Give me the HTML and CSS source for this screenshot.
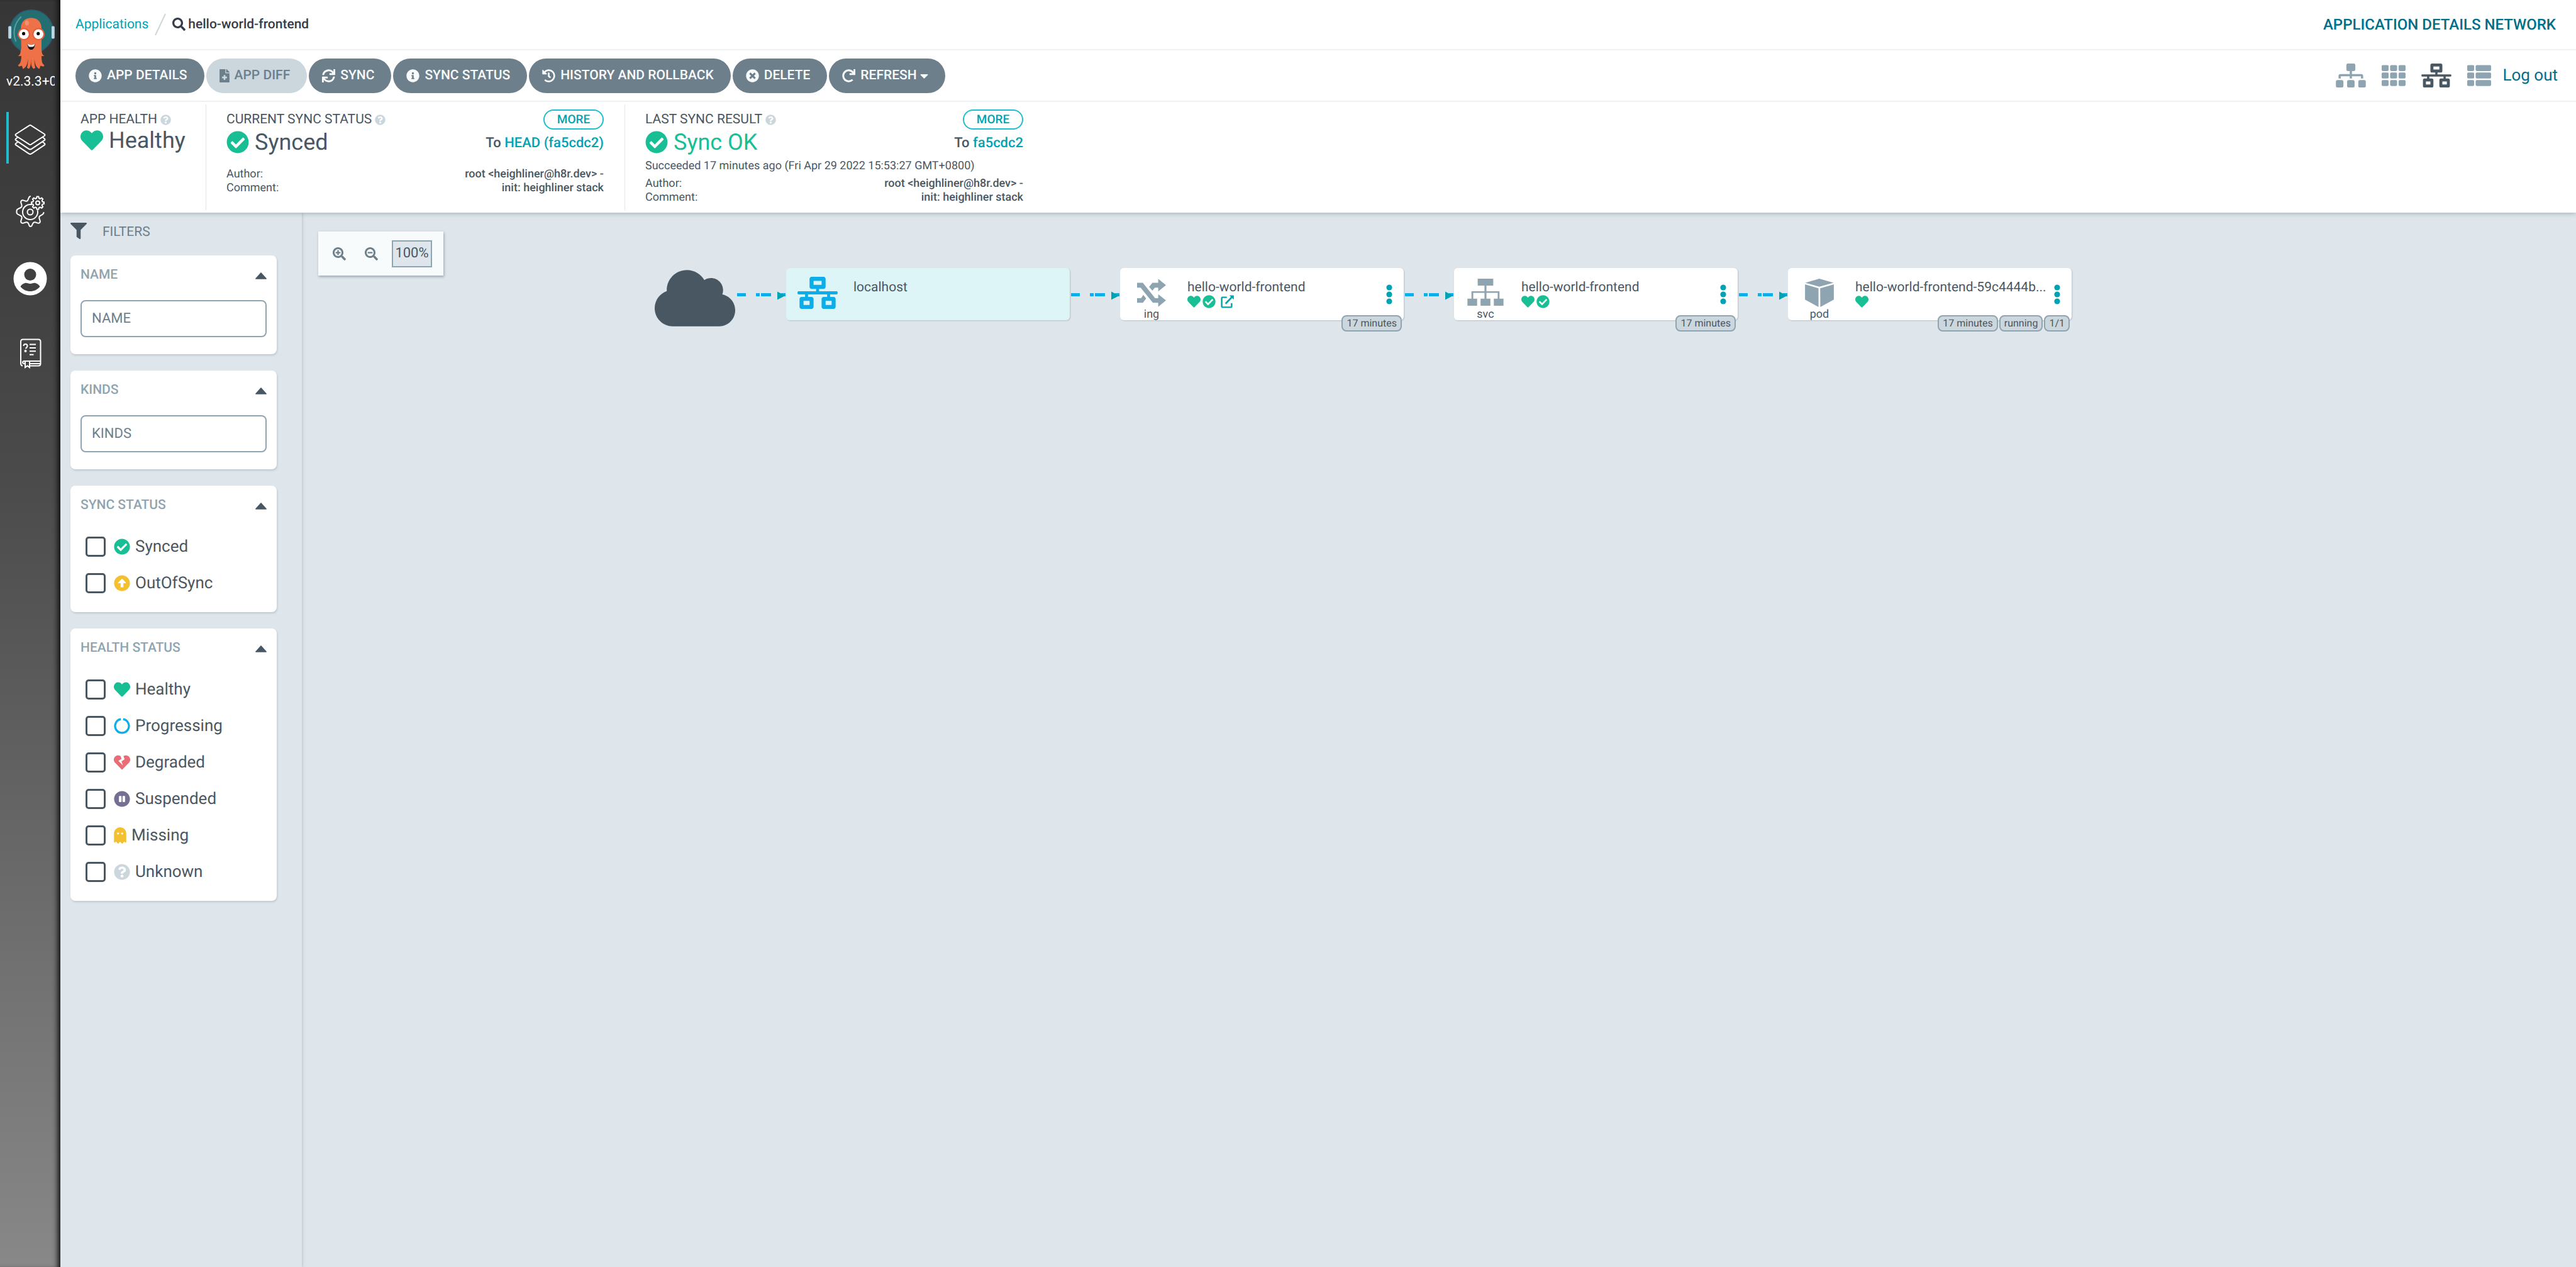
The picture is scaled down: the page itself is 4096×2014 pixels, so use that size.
FILE: index.html
```html
<!DOCTYPE html>
<html lang="en">
<head>
<meta charset="utf-8">
<title>hello-world-frontend - Application Details Network - Argo CD</title>
<link rel="stylesheet" href="styles.css">
</head>
<body>
<svg class="sprite" aria-hidden="true">
  <symbol id="i-info" viewBox="0 0 512 512"><path d="M256 8C119.043 8 8 119.083 8 256c0 136.997 111.043 248 248 248s248-111.003 248-248C504 119.083 392.957 8 256 8zm0 110c23.196 0 42 18.804 42 42s-18.804 42-42 42-42-18.804-42-42 18.804-42 42-42zm56 254c0 6.627-5.373 12-12 12h-88c-6.627 0-12-5.373-12-12v-24c0-6.627 5.373-12 12-12h12v-64h-12c-6.627 0-12-5.373-12-12v-24c0-6.627 5.373-12 12-12h64c6.627 0 12 5.373 12 12v100h12c6.627 0 12 5.373 12 12v24z"/></symbol>
  <symbol id="i-check" viewBox="0 0 512 512"><path d="M504 256c0 136.967-111.033 248-248 248S8 392.967 8 256 119.033 8 256 8s248 111.033 248 248zM227.314 387.314l184-184c6.248-6.248 6.248-16.379 0-22.627l-22.627-22.627c-6.248-6.249-16.379-6.249-22.628 0L216 308.118l-70.059-70.059c-6.248-6.248-16.379-6.248-22.628 0l-22.627 22.627c-6.248 6.248-6.248 16.379 0 22.627l104 104c6.249 6.249 16.379 6.249 22.628.001z"/></symbol>
  <symbol id="i-heart" viewBox="0 0 512 512"><path d="M462.3 62.6C407.5 15.9 326 24.3 275.7 76.2L256 96.5l-19.7-20.3C186.1 24.3 104.5 15.9 49.7 62.6c-62.8 53.6-66.1 149.8-9.9 207.9l193.5 199.8c12.5 12.9 32.8 12.9 45.3 0l193.5-199.8c56.3-58.1 53-154.3-9.8-207.9z"/></symbol>
  <symbol id="i-broken" viewBox="0 0 512 512"><path d="M473.7 73.8l-2.4-2.5c-46-47-118-51.7-169.6-14.8L336 159.9l-96 64 48 128-144-144 96-64-28.6-86.5C159.7 19.6 87 24 40.7 71.4l-2.4 2.4C-10.4 123.6-12.5 202.9 31 256l212.1 218.6c7.1 7.3 18.6 7.3 25.7 0L481 255.9c43.5-53 41.4-132.3-7.3-182.1z"/></symbol>
  <symbol id="i-file" viewBox="0 0 384 512"><path d="M377 105L279.1 7c-4.5-4.5-10.6-7-17-7H256v128h128v-6.1c0-6.3-2.5-12.4-7-16.9zm-153 31V0H24C10.7 0 0 10.7 0 24v464c0 13.3 10.7 24 24 24h336c13.3 0 24-10.7 24-24V160H248c-13.2 0-24-10.8-24-24zm64 160v48c0 4.4-3.6 8-8 8h-56v56c0 4.4-3.6 8-8 8h-48c-4.4 0-8-3.6-8-8v-56h-56c-4.4 0-8-3.6-8-8v-48c0-4.4 3.6-8 8-8h56v-56c0-4.4 3.6-8 8-8h48c4.4 0 8 3.6 8 8v56h56c4.4 0 8 3.6 8 8z"/></symbol>
  <symbol id="i-sync" viewBox="0 0 512 512"><path d="M440.65 12.57l4 82.77A247.16 247.16 0 0 0 255.83 8C134.73 8 33.91 94.92 12.29 209.82A12 12 0 0 0 24.09 224h49.05a12 12 0 0 0 11.67-9.26 175.91 175.91 0 0 1 317-56.94l-101.46-4.86a12 12 0 0 0-12.57 12v47.41a12 12 0 0 0 12 12H500a12 12 0 0 0 12-12V12a12 12 0 0 0-12-12h-47.37a12 12 0 0 0-11.98 12.57zM255.83 432a175.61 175.61 0 0 1-146-77.8l101.8 4.87a12 12 0 0 0 12.57-12v-47.4a12 12 0 0 0-12-12H12a12 12 0 0 0-12 12V500a12 12 0 0 0 12 12h47.35a12 12 0 0 0 12-12.6l-4.15-82.57A247.17 247.17 0 0 0 255.83 504c121.11 0 221.93-86.92 243.55-201.82a12 12 0 0 0-11.8-14.18h-49.05a12 12 0 0 0-11.67 9.26A175.86 175.86 0 0 1 255.83 432z"/></symbol>
  <symbol id="i-history" viewBox="0 0 512 512"><path d="M504 255.531c.253 136.64-111.18 248.372-247.82 248.468-59.015.042-113.223-20.53-155.822-54.911-11.077-8.94-11.905-25.541-1.839-35.607l11.267-11.267c8.609-8.609 22.353-9.551 31.891-1.984C173.062 425.135 212.781 440 256 440c101.705 0 184-82.311 184-184 0-101.705-82.311-184-184-184-48.814 0-93.149 18.969-126.068 49.932l50.754 50.754c10.08 10.08 2.941 27.314-11.313 27.314H24c-8.837 0-16-7.163-16-16V38.627c0-14.254 17.234-21.393 27.314-11.314l49.372 49.372C129.209 34.136 189.552 8 256 8c136.81 0 247.747 110.78 248 247.531zm-180.912 78.784l9.823-12.63c8.138-10.463 6.253-25.542-4.21-33.679L288 256.349V152c0-13.255-10.745-24-24-24h-16c-13.255 0-24 10.745-24 24v135.651l65.409 50.874c10.463 8.137 25.541 6.253 33.679-4.21z"/></symbol>
  <symbol id="i-times" viewBox="0 0 512 512"><path d="M256 8C119 8 8 119 8 256s111 248 248 248 248-111 248-248S393 8 256 8zm121.6 313.1c4.7 4.7 4.7 12.3 0 17L338 377.6c-4.7 4.7-12.3 4.7-17 0L256 312l-65.1 65.6c-4.7 4.7-12.3 4.7-17 0L134.4 338c-4.7-4.7-4.7-12.3 0-17l65.6-65-65.6-65.1c-4.7-4.7-4.7-12.3 0-17l39.6-39.6c4.7-4.7 12.3-4.7 17 0l65 65.7 65.1-65.6c4.7-4.7 12.3-4.7 17 0l39.6 39.6c4.7 4.7 4.7 12.3 0 17L312 256l65.6 65.1z"/></symbol>
  <symbol id="i-redo" viewBox="0 0 512 512"><path d="M500.33 0h-47.41a12 12 0 0 0-12 12.57l4 82.76A247.42 247.42 0 0 0 256 8C119.34 8 7.9 119.53 8 256.19 8.1 393.07 119.1 504 256 504a247.1 247.1 0 0 0 166.18-63.91 12 12 0 0 0 .48-17.43l-34-34a12 12 0 0 0-16.38-.55A176 176 0 1 1 402.1 157.8l-101.53-4.87a12 12 0 0 0-12.57 12v47.41a12 12 0 0 0 12 12h200.33a12 12 0 0 0 12-12V12a12 12 0 0 0-12-12z"/></symbol>
  <symbol id="i-caret" viewBox="0 0 320 512"><path d="M31.3 192h257.3c17.8 0 26.7 21.5 14.1 34.1L174.1 354.8c-7.8 7.8-20.5 7.8-28.3 0L17.2 226.1C4.6 213.5 13.5 192 31.3 192z"/></symbol>
  <symbol id="i-up" viewBox="0 0 288 170"><path d="M14 170h260c13 0 18-14 9-23L158 8c-8-9-20-9-28 0L5 147c-9 9-4 23 9 23z"/></symbol>
  <symbol id="i-question" viewBox="0 0 512 512"><path d="M504 256c0 136.997-111.043 248-248 248S8 392.997 8 256C8 119.083 119.043 8 256 8s248 111.083 248 248zM262.655 90c-54.497 0-89.255 22.957-116.549 63.758-3.536 5.286-2.353 12.415 2.715 16.258l34.699 26.31c5.205 3.947 12.621 3.008 16.665-2.122 17.864-22.658 30.113-35.797 57.303-35.797 20.429 0 45.698 13.148 45.698 32.958 0 14.976-12.363 22.667-32.534 33.976C247.128 238.528 216 254.941 216 296v4c0 6.627 5.373 12 12 12h56c6.627 0 12-5.373 12-12v-1.333c0-28.462 83.186-29.647 83.186-106.667 0-58.002-60.165-102-116.531-102zM256 338c-25.365 0-46 20.635-46 46 0 25.364 20.635 46 46 46s46-20.636 46-46c0-25.365-20.635-46-46-46z"/></symbol>
  <symbol id="i-pause" viewBox="0 0 512 512"><path d="M256 8C119 8 8 119 8 256s111 248 248 248 248-111 248-248S393 8 256 8zm-16 328c0 8.800-7.200 16-16 16h-48c-8.800 0-16-7.200-16-16V176c0-8.800 7.200-16 16-16h48c8.800 0 16 7.200 16 16v160zm112 0c0 8.800-7.200 16-16 16h-48c-8.800 0-16-7.200-16-16V176c0-8.800 7.200-16 16-16h48c8.800 0 16 7.200 16 16v160z"/></symbol>
  <symbol id="i-ghost" viewBox="0 0 384 512"><path d="M186.1.09C81.01 3.24 0 94.92 0 200.05v263.92c0 14.26 17.23 21.39 27.31 11.31l24.92-18.53c6.66-4.95 16-3.99 21.51 2.21l42.95 48.35c6.25 6.25 16.38 6.25 22.63 0l40.72-45.85c6.37-7.17 17.56-7.17 23.92 0l40.72 45.85c6.25 6.25 16.38 6.25 22.63 0l42.95-48.35c5.51-6.2 14.85-7.17 21.51-2.21l24.92 18.53c10.08 10.08 27.31 2.94 27.31-11.31V192C384 84 294.83-3.17 186.1.09zM128 224c-17.67 0-32-14.33-32-32s14.33-32 32-32 32 14.33 32 32-14.33 32-32 32zm128 0c-17.67 0-32-14.33-32-32s14.33-32 32-32 32 14.33 32 32-14.33 32-32 32z"/></symbol>
  <symbol id="i-arrow-up" viewBox="0 0 512 512"><path d="M8 256C8 119 119 8 256 8s248 111 248 248-111 248-248 248S8 393 8 256zm292 116V256h70.9c10.7 0 16.1-13 8.5-20.5L264.5 121.200c-4.700-4.700-12.200-4.700-16.900 0l-115 114.300c-7.600 7.600-2.200 20.500 8.500 20.500H212v116c0 6.600 5.400 12 12 12h64c6.600 0 12-5.400 12-12z"/></symbol>
  <symbol id="i-notch" viewBox="0 0 512 512"><path d="M290 43A216 216 0 1 1 222 43" fill="none" stroke="currentColor" stroke-width="64"/></symbol>
  <symbol id="i-filter" viewBox="0 0 512 512"><path d="M487.976 0H24.028C2.71 0-8.047 25.866 7.058 40.971L192 225.941V432c0 7.831 3.821 15.17 10.237 19.662l80 55.98C298.02 518.69 320 507.493 320 487.98V225.941l184.947-184.97C520.021 25.896 509.338 0 487.976 0z"/></symbol>
  <symbol id="i-search" viewBox="0 0 512 512"><path d="M505 442.7L405.3 343c-4.5-4.5-10.6-7-17-7H372c27.6-35.3 44-79.7 44-128C416 93.1 322.9 0 208 0S0 93.1 0 208s93.1 208 208 208c48.3 0 92.7-16.4 128-44v16.3c0 6.4 2.5 12.5 7 17l99.7 99.7c9.4 9.4 24.6 9.4 33.9 0l28.3-28.3c9.4-9.4 9.4-24.6.1-34zM208 336c-70.7 0-128-57.2-128-128 0-70.7 57.2-128 128-128 70.7 0 128 57.2 128 128 0 70.7-57.2 128-128 128z"/></symbol>
  <symbol id="i-zoom-in" viewBox="0 0 512 512"><path d="M304 192v32c0 6.6-5.4 12-12 12h-56v56c0 6.6-5.4 12-12 12h-32c-6.6 0-12-5.4-12-12v-56h-56c-6.6 0-12-5.4-12-12v-32c0-6.6 5.4-12 12-12h56v-56c0-6.6 5.4-12 12-12h32c6.6 0 12 5.4 12 12v56h56c6.6 0 12 5.4 12 12zm201 284.7L476.7 505c-9.4 9.4-24.6 9.4-33.9 0L343 405.3c-4.5-4.5-7-10.6-7-17V372c-35.3 27.6-79.7 44-128 44C93.1 416 0 322.9 0 208S93.1 0 208 0s208 93.1 208 208c0 48.3-16.4 92.7-44 128h16.3c6.4 0 12.5 2.5 17 7l99.7 99.7c9.3 9.4 9.3 24.6 0 34zM344 208c0-75.2-60.8-136-136-136S72 132.8 72 208s60.8 136 136 136 136-60.8 136-136z"/></symbol>
  <symbol id="i-zoom-out" viewBox="0 0 512 512"><path d="M304 192v32c0 6.600-5.400 12-12 12H124c-6.600 0-12-5.400-12-12v-32c0-6.600 5.400-12 12-12h168c6.600 0 12 5.400 12 12zm201 284.700L476.700 505c-9.400 9.400-24.600 9.400-33.900 0L343 405.300c-4.500-4.500-7-10.600-7-17V372c-35.300 27.600-79.700 44-128 44C93.100 416 0 322.900 0 208S93.100 0 208 0s208 93.100 208 208c0 48.300-16.400 92.700-44 128h16.300c6.400 0 12.500 2.500 17 7l99.700 99.700c9.300 9.400 9.300 24.600 0 34zM344 208c0-75.200-60.800-136-136-136S72 132.800 72 208s60.800 136 136 136 136-60.800 136-136z"/></symbol>
  <symbol id="i-tree" viewBox="0 0 640 512"><path d="M128 352H32c-17.67 0-32 14.33-32 32v96c0 17.67 14.33 32 32 32h96c17.67 0 32-14.33 32-32v-96c0-17.67-14.33-32-32-32zm-24-80h192v48h48v-48h192v48h48v-57.59c0-21.17-17.23-38.41-38.41-38.41H344v-64h40c17.67 0 32-14.33 32-32V32c0-17.67-14.33-32-32-32H256c-17.67 0-32 14.33-32 32v96c0 17.67 14.33 32 32 32h40v64H94.410C73.230 224 56 241.230 56 262.410V320h48v-48zm264 80h-96c-17.670 0-32 14.330-32 32v96c0 17.670 14.330 32 32 32h96c17.670 0 32-14.330 32-32v-96c0-17.670-14.330-32-32-32zm240 0h-96c-17.670 0-32 14.330-32 32v96c0 17.670 14.330 32 32 32h96c17.670 0 32-14.330 32-32v-96c0-17.670-14.330-32-32-32z"/></symbol>
  <symbol id="i-grid" viewBox="0 0 512 512"><g><rect x="0" y="32" width="149" height="128" rx="24"/><rect x="181" y="32" width="149" height="128" rx="24"/><rect x="363" y="32" width="149" height="128" rx="24"/><rect x="0" y="192" width="149" height="128" rx="24"/><rect x="181" y="192" width="149" height="128" rx="24"/><rect x="363" y="192" width="149" height="128" rx="24"/><rect x="0" y="352" width="149" height="128" rx="24"/><rect x="181" y="352" width="149" height="128" rx="24"/><rect x="363" y="352" width="149" height="128" rx="24"/></g></symbol>
  <symbol id="i-list" viewBox="0 0 512 512"><g><rect x="0" y="32" width="149" height="128" rx="24"/><rect x="181" y="32" width="331" height="128" rx="24"/><rect x="0" y="192" width="149" height="128" rx="24"/><rect x="181" y="192" width="331" height="128" rx="24"/><rect x="0" y="352" width="149" height="128" rx="24"/><rect x="181" y="352" width="331" height="128" rx="24"/></g></symbol>
  <symbol id="i-network" viewBox="0 0 640 512"><path d="M640 264v-16c0-8.84-7.16-16-16-16H344v-40h72c17.67 0 32-14.33 32-32V32c0-17.67-14.33-32-32-32H224c-17.67 0-32 14.33-32 32v128c0 17.67 14.33 32 32 32h72v40H16c-8.84 0-16 7.16-16 16v16c0 8.84 7.16 16 16 16h104v40H64c-17.67 0-32 14.33-32 32v128c0 17.67 14.33 32 32 32h160c17.67 0 32-14.33 32-32V352c0-17.67-14.33-32-32-32h-56v-40h304v40h-56c-17.67 0-32 14.33-32 32v128c0 17.67 14.33 32 32 32h160c17.67 0 32-14.33 32-32V352c0-17.67-14.33-32-32-32h-56v-40h104c8.84 0 16-7.16 16-16zM256 128V64h128v64H256zm-64 320H96v-64h96v64zm352 0h-96v-64h96v64z"/></symbol>
  <symbol id="i-cloud" viewBox="0 32 640 448"><path d="M537.6 226.6c4.1-10.7 6.4-22.4 6.4-34.6 0-53-43-96-96-96-19.7 0-38.1 6-53.3 16.2C367 64.2 315.3 32 256 32c-88.4 0-160 71.6-160 160 0 2.7.1 5.4.2 8.1C40.2 219.8 0 273.2 0 336c0 79.5 64.5 144 144 144h368c70.7 0 128-57.3 128-128 0-61.9-44-113.6-102.4-125.4z"/></symbol>
  <symbol id="i-external" viewBox="0 0 26 26"><path d="M12 4.500H3.500a1.500 1.500 0 0 0-1.500 1.500V22.500a1.500 1.500 0 0 0 1.500 1.500H20a1.500 1.500 0 0 0 1.500-1.500V16" fill="none" stroke="currentColor" stroke-width="3"/><path d="M9.500 17L22 4" stroke="currentColor" stroke-width="3.200" fill="none"/><path d="M17 0.500H25a.8.8 0 0 1 .8.800V9z"/></symbol>
  <symbol id="i-shuffle" viewBox="0 0 58 56"><path d="M0 7.700h11.600L36.200 38.700h6.200v-8L58 43 42.400 56v-8H31.700L7.100 17.700H0zM0 38.700h8l4.500-6.700 5.800 7.300L11.600 48H0zM24.100 16l6.700-8.300h11.600V0L58 12.700 42.400 25.300v-7.600h-6.700l-4.900 6z"/></symbol>
  <symbol id="i-svc" viewBox="0 0 72 54"><path d="M20.500 0h31v13.700H38V25h26v15h-3.600V28.400H38V40h-4V28.400H11.600V40H8V25h26V13.700H20.500zM0 40h19.300v14H0zM26.200 40h19.600v14H26.200zM52.700 40H72v14H52.700z"/></symbol>
  <symbol id="i-pod" viewBox="0 0 57 56"><path d="M.5 8L28.300 0 56.500 8 28.300 16zM0 11.300L26.700 19v37L0 41.300zM30 19l27-7.700v30L30.300 56z"/></symbol>
  <symbol id="i-kebab" viewBox="0 0 10 32"><g><circle cx="5" cy="5" r="4.600"/><circle cx="5" cy="16" r="4.600"/><circle cx="5" cy="27" r="4.600"/></g></symbol>
  <symbol id="i-edge" viewBox="0 0 80 84"><path d="M2 40h14v5H2zM32 40h6v5h-6zM40 40h16v5H40zM72 40h7v5h-7z" fill="#0dadea"/><path d="M66 37.500L78.500 44 66 50.500z" fill="#00a2b3"/></symbol>
</svg>

<nav class="nav-bar" aria-label="Main">
  <a class="nav-logo" href="#" aria-label="Argo">
    <svg viewBox="0 0 92 120" width="74" height="96">
      <circle cx="46" cy="44" r="43" fill="#226e70" stroke="#2f5a74" stroke-width="2"/>
      <rect x="0" y="33" width="6" height="25" rx="2" fill="#b9d6e6"/>
      <rect x="86" y="33" width="6" height="25" rx="2" fill="#b9d6e6"/>
      <path d="M25 15C12 28 8 46 15 63" fill="none" stroke="#5d9a9b" stroke-width="2.500" stroke-linecap="round"/>
      <path d="M25 38C25 24 34 17 45.500 17S66 24 66 38V88c0 14 1 20 5 22l-1 3-6-1c-2 5-1 6-3 6-7-5-8-10-9-20 0 8 0 13 2 18l-4 2c-5-5-5-12-4.500-20-1 8 0 15-4.500 20l-4-2c2-5 2-10 2-18-1 10-2 15-9 20-2 0-1-1-3-6l-6 1-1-3c4-2 6-8 6-22z" fill="#ee7147"/>
      <path d="M25 78c-1 10-1 12-6 14 5 2 8 0 8 0l0 10c-2 8-4 8-8 9l2 2c8 0 10-6 11-12zM66 78c1 10 1 12 6 14-5 2-8 0-8 0l0 10c2 8 4 8 8 9l-2 2c-8 0-10-6-11-12z" fill="#ee7147"/>
      <circle cx="31" cy="49" r="12.500" fill="#e4603c"/><circle cx="60" cy="49" r="12.500" fill="#e4603c"/>
      <circle cx="31" cy="49" r="9.700" fill="#fff"/><circle cx="60" cy="49" r="9.700" fill="#fff"/>
      <circle cx="30.500" cy="48" r="3.200" fill="#000"/><circle cx="59.500" cy="48" r="3.200" fill="#000"/>
      <ellipse cx="37" cy="27" rx="4" ry="5" fill="#f2906f"/>
      <path d="M38 68c5 3 10 3 15 0 0 7-3 12-7.500 12S38 75 38 68z" fill="#201414"/><path d="M38 68c5 3 10 3 15 0l-2 5c-4 2-8 2-11 0z" fill="#fff"/>
    </svg>
  </a>
  <div class="nav-version">v2.3.3+0</div>
  <a class="nav-item nav-item--active" href="#" aria-label="Applications">
    <svg viewBox="0 0 64 64" width="64" height="64" stroke="#fff" stroke-width="2" stroke-linejoin="round"><path d="M30 9.800q2-1.400 4 0L54.500 23q2 1.500 0 3L34 39.200q-2 1.400-4 0L9.500 26q-2-1.500 0-3z"/><path d="M12.500 28l-3 2.200q-2 1.500 0 3L30 46.800q2 1.400 4 0l20.500-13.600q2-1.500 0-3l-3-2.200"/><path d="M12.500 35.500l-3 2.200q-2 1.500 0 3L30 54.300q2 1.400 4 0l20.500-13.600q2-1.500 0-3l-3-2.200"/></svg>
  </a>
  <a class="nav-item" href="#" aria-label="Settings">
    <svg viewBox="0 2 64 64" width="64" height="64" stroke="#fff" stroke-width="2" stroke-linejoin="round" stroke-linecap="round"><circle cx="32" cy="36" r="4.500"/><path d="M34 24.200A12 12 0 1 0 43.800 34"/><path d="M32 11c-4 2-2 6-5 7.500-4 1.500-6-3.500-9-.5s2 5.500.5 9.500c-1.500 3.500-8 2-8 6.500v3c0 4 6.500 3 8 6.500 1.500 4-3.500 6.500-.5 9.500s5.500-2 9.500-.5c3.500 1.500 1.500 6.500 5 6.500s2-5 5.500-6.500c4-1.500 6 3.500 9 .5s-2-5.500-.5-9.500c1.500-3 6-2 7-6.500"/><circle cx="44" cy="21.500" r="3"/><path d="M42.600 11.500h2.800l.6 2.700 1.800.8 2.400-1.500 2 2-1.500 2.400.8 1.800 2.500.5v2.800l-2.500.6-.8 1.800 1.500 2.400-2 2-2.400-1.500-1.800.8-.6 2.600h-2.800l-.6-2.600-1.800-.8-2.400 1.500-2-2 1.500-2.400-.8-1.800-2.500-.6v-2.800l2.500-.5.8-1.800-1.500-2.400 2-2 2.400 1.500 1.800-.8z"/></svg>
  </a>
  <a class="nav-item" href="#" aria-label="User info">
    <svg viewBox="0 0 64 64" width="64" height="64"><circle cx="32" cy="27" r="26.500" fill="#fff"/><circle cx="32" cy="20.500" r="9.500" fill="#404040"/><path d="M16.500 39.500C20 34 26 33 28 34.300q4 1.400 8 0C38 33 44 34 47.500 39.500 40 49.500 24 49.500 16.500 39.500z" fill="#404040"/></svg>
  </a>
  <a class="nav-item" href="#" aria-label="Documentation">
    <svg viewBox="0 0 64 64" width="64" height="64" stroke="#fff" stroke-width="2"><path d="M20 52.500q-3-.5-3-4V14q0-3.500 3.500-3.500h24.500q3.500 0 3.500 3.500V49q0 3.500-3.500 3.500H32"/><path d="M48.500 45H23q-3 0-3 2t3 2h1M31 49h17"/><path d="M24 45v10l3.500-2.500L31 55V45"/><path d="M31 18.500h10M31 24h10M31 29.300h10M31 34.800h6.500"/><path d="M21.500 21q0-3 3-3t3 2.500-3 4.500"/><circle cx="24.500" cy="29" r="1" fill="#fff"/></svg>
  </a>
</nav>

<div class="page">
  <header class="top-bar">
    <nav class="breadcrumb" aria-label="Breadcrumb">
      <a class="breadcrumb-link" href="#">Applications</a>
      <svg class="slash" viewBox="0 0 18 36" width="18" height="36"><path d="M1 35L17 1" stroke="#ccd6dd" stroke-width="2"/></svg>
      <span class="breadcrumb-current"><svg class="icon-21"><use href="#i-search"/></svg>hello-world-frontend</span>
    </nav>
    <h1 class="page-title">APPLICATION DETAILS NETWORK</h1>
  </header>

  <div class="toolbar">
    <div class="actions">
      <button class="btn"><svg class="icon-21"><use href="#i-info"/></svg>APP DETAILS</button>
      <button class="btn btn--disabled" disabled><svg class="icon-file"><use href="#i-file"/></svg>APP DIFF</button>
      <button class="btn"><svg class="icon-21"><use href="#i-sync"/></svg>SYNC</button>
      <button class="btn"><svg class="icon-21"><use href="#i-info"/></svg>SYNC STATUS</button>
      <button class="btn"><svg class="icon-21"><use href="#i-history"/></svg>HISTORY AND ROLLBACK</button>
      <button class="btn"><svg class="icon-21"><use href="#i-times"/></svg>DELETE</button>
      <button class="btn"><svg class="icon-21"><use href="#i-redo"/></svg>REFRESH<svg class="icon-caret"><use href="#i-caret"/></svg></button>
    </div>
    <div class="views">
      <button class="view" aria-label="Tree"><svg class="icon-wide"><use href="#i-tree"/></svg></button>
      <button class="view" aria-label="Pods"><svg class="icon-38"><use href="#i-grid"/></svg></button>
      <button class="view view--active" aria-label="Network"><svg class="icon-wide"><use href="#i-network"/></svg></button>
      <button class="view" aria-label="List"><svg class="icon-38"><use href="#i-list"/></svg></button>
      <a class="logout" href="#">Log out</a>
    </div>
  </div>

  <section class="status-panel">
    <div class="status status--health">
      <div class="status-head"><span class="status-label">APP HEALTH <svg class="icon-help"><use href="#i-question"/></svg></span></div>
      <div class="status-row"><span class="status-value"><svg class="icon-36 green"><use href="#i-heart"/></svg>Healthy</span></div>
    </div>
    <div class="status status--wide">
      <div class="status-head"><span class="status-label">CURRENT SYNC STATUS <svg class="icon-help"><use href="#i-question"/></svg></span><button class="more">MORE</button></div>
      <div class="status-row"><span class="status-value"><svg class="icon-36 green"><use href="#i-check"/></svg>Synced</span><span class="revision">To <a href="#">HEAD (fa5cdc2)</a></span></div>
      <dl class="meta meta--spaced"><dt>Author:</dt><dd>root &lt;heighliner@h8r.dev&gt; -</dd><dt>Comment:</dt><dd>init: heighliner stack</dd></dl>
    </div>
    <div class="status status--wide status--last">
      <div class="status-head"><span class="status-label">LAST SYNC RESULT <svg class="icon-help"><use href="#i-question"/></svg></span><button class="more">MORE</button></div>
      <div class="status-row"><span class="status-value green"><svg class="icon-36"><use href="#i-check"/></svg>Sync OK</span><span class="revision">To <a href="#">fa5cdc2</a></span></div>
      <p class="result-time">Succeeded 17 minutes ago (Fri Apr 29 2022 15:53:27 GMT+0800)</p>
      <dl class="meta"><dt>Author:</dt><dd>root &lt;heighliner@h8r.dev&gt; -</dd><dt>Comment:</dt><dd>init: heighliner stack</dd></dl>
    </div>
  </section>

  <main class="content">
    <aside class="filters">
      <div class="filters-head"><svg class="icon-26"><use href="#i-filter"/></svg><span>FILTERS</span></div>
      <div class="filter-card">
        <div class="filter-title"><label for="f-name">NAME</label><svg class="icon-up"><use href="#i-up"/></svg></div>
        <input class="filter-input" id="f-name" type="text" placeholder="NAME">
      </div>
      <div class="filter-card">
        <div class="filter-title"><label for="f-kinds">KINDS</label><svg class="icon-up"><use href="#i-up"/></svg></div>
        <input class="filter-input" id="f-kinds" type="text" placeholder="KINDS">
      </div>
      <div class="filter-card">
        <div class="filter-title"><span>SYNC STATUS</span><svg class="icon-up"><use href="#i-up"/></svg></div>
        <div class="options">
          <label class="option"><input type="checkbox"><svg class="icon-26 green"><use href="#i-check"/></svg>Synced</label>
          <label class="option"><input type="checkbox"><svg class="icon-26 yellow"><use href="#i-arrow-up"/></svg>OutOfSync</label>
        </div>
      </div>
      <div class="filter-card">
        <div class="filter-title"><span>HEALTH STATUS</span><svg class="icon-up"><use href="#i-up"/></svg></div>
        <div class="options">
          <label class="option"><input type="checkbox"><svg class="icon-26 green"><use href="#i-heart"/></svg>Healthy</label>
          <label class="option"><input type="checkbox"><svg class="icon-26 blue"><use href="#i-notch"/></svg>Progressing</label>
          <label class="option"><input type="checkbox"><svg class="icon-26 red"><use href="#i-broken"/></svg>Degraded</label>
          <label class="option"><input type="checkbox"><svg class="icon-26 purple"><use href="#i-pause"/></svg>Suspended</label>
          <label class="option"><input type="checkbox"><svg class="icon-ghost yellow"><use href="#i-ghost"/></svg>Missing</label>
          <label class="option"><input type="checkbox"><svg class="icon-26 pale"><use href="#i-question"/></svg>Unknown</label>
        </div>
      </div>
    </aside>

    <section class="canvas">
      <div class="zoom">
        <button class="zoom-btn" aria-label="Zoom in"><svg class="icon-21"><use href="#i-zoom-in"/></svg></button>
        <button class="zoom-btn" aria-label="Zoom out"><svg class="icon-21"><use href="#i-zoom-out"/></svg></button>
        <output class="zoom-value">100%</output>
      </div>
      <div class="graph">
        <svg class="cloud"><use href="#i-cloud"/></svg>
        <svg class="edge"><use href="#i-edge"/></svg>
        <article class="node node--host">
          <div class="node-kind"><svg class="icon-host"><use href="#i-network"/></svg></div>
          <div class="node-body"><div class="node-name">localhost</div></div>
        </article>
        <svg class="edge"><use href="#i-edge"/></svg>
        <article class="node">
          <div class="node-kind"><svg class="icon-kind"><use href="#i-shuffle"/></svg><span>ing</span></div>
          <div class="node-body"><div class="node-name">hello-world-frontend</div>
            <div class="node-state"><svg class="icon-21"><use href="#i-heart"/></svg><svg class="icon-21"><use href="#i-check"/></svg><a class="node-link" href="#" aria-label="Open"><svg class="icon-21"><use href="#i-external"/></svg></a></div></div>
          <button class="kebab" aria-label="Menu"><svg class="icon-kebab"><use href="#i-kebab"/></svg></button>
          <div class="tags"><span class="tag">17 minutes</span></div>
        </article>
        <svg class="edge"><use href="#i-edge"/></svg>
        <article class="node">
          <div class="node-kind"><svg class="icon-svc"><use href="#i-svc"/></svg><span>svc</span></div>
          <div class="node-body"><div class="node-name">hello-world-frontend</div>
            <div class="node-state"><svg class="icon-21"><use href="#i-heart"/></svg><svg class="icon-21"><use href="#i-check"/></svg></div></div>
          <button class="kebab" aria-label="Menu"><svg class="icon-kebab"><use href="#i-kebab"/></svg></button>
          <div class="tags"><span class="tag">17 minutes</span></div>
        </article>
        <svg class="edge"><use href="#i-edge"/></svg>
        <article class="node">
          <div class="node-kind"><svg class="icon-kind"><use href="#i-pod"/></svg><span>pod</span></div>
          <div class="node-body"><div class="node-name">hello-world-frontend-59c4444b...</div>
            <div class="node-state"><svg class="icon-21"><use href="#i-heart"/></svg></div></div>
          <button class="kebab" aria-label="Menu"><svg class="icon-kebab"><use href="#i-kebab"/></svg></button>
          <div class="tags"><span class="tag">17 minutes</span><span class="tag">running</span><span class="tag">1/1</span></div>
        </article>
      </div>
    </section>
  </main>
</div>
</body>
</html>
```

FILE: styles.css
```css
* { box-sizing: border-box; }

body {
  margin: 0;
  display: flex;
  min-height: 100vh;
  background: #dee6eb;
  color: #495763;
  font: 400 21px/24px Roboto, "Liberation Sans", sans-serif;
  text-rendering: geometricPrecision;
}

a { color: #00a2b3; text-decoration: none; }
button { font: inherit; border: 0; padding: 0; background: none; color: inherit; cursor: pointer; text-rendering: inherit; }
svg { display: block; flex: none; fill: currentColor; }
.sprite { position: absolute; width: 0; height: 0; }

/* Icon sizes */
.icon-21 { width: 21px; height: 21px; }
.icon-26 { width: 26px; height: 26px; }
.icon-36 { width: 36px; height: 36px; }
.icon-38 { width: 38px; height: 38px; }
.icon-wide { width: 48px; height: 38px; }
.icon-file { width: 16px; height: 21px; }
.icon-caret { width: 13px; height: 21px; margin-left: -3px; }
.icon-help { width: 17px; height: 17px; color: #ccd6dd; }
.icon-ghost { width: 20px; height: 26px; }
.icon-up { width: 18px; height: 11px; }
.icon-host { width: 64px; height: 51px; }
.icon-kind { width: 46px; height: 45px; }
.icon-svc { width: 58px; height: 43px; }
.icon-kebab { width: 10px; height: 32px; }

/* State colours */
.green { color: #18be94; }
.yellow { color: #f4c030; }
.blue { color: #0dadea; }
.red { color: #e96d76; }
.purple { color: #766f94; }
.pale { color: #ccd6dd; }

/* Left navigation */
.nav-bar {
  flex: none;
  width: 96px;
  padding-top: 15px;
  display: flex;
  flex-direction: column;
  background: linear-gradient(#363636, #3e3e3e 18%, #4b4b4b 38%, #888);
  box-shadow: inset -9px 0 8px -5px #111;
}
.nav-bar svg { fill: none; }
.nav-logo { align-self: center; margin-left: 4px; }
.nav-version {
  margin: 7px 9px 36px 10px;
  color: #fff;
  overflow: hidden;
  white-space: nowrap;
}
.nav-item {
  height: 82px;
  margin: 0 10px 31px;
  padding: 6px 4px 0 0;
  border-left: 4px solid transparent;
  display: flex;
  align-items: center;
  justify-content: center;
}
.nav-item--active { border-left-color: #1fbdd0; }

.page { flex: 1; min-width: 0; display: flex; flex-direction: column; }

/* Breadcrumb bar */
.top-bar {
  height: 80px;
  padding: 0 32px 1px 24px;
  display: flex;
  align-items: center;
  justify-content: space-between;
  background: #fff;
  border-bottom: 2px solid #edf2f6;
}
.breadcrumb { display: flex; align-items: center; gap: 10px; }
.breadcrumb-current { display: flex; align-items: center; gap: 4px; color: #363c4a; font-weight: 500; }
.page-title { margin: 0; font-size: 24px; font-weight: 500; color: #006f8a; }

/* Action buttons */
.toolbar {
  height: 82px;
  padding: 1px 29px 0 24px;
  display: flex;
  align-items: center;
  justify-content: space-between;
  background: #fff;
  border-bottom: 2px solid #edf2f6;
}
.actions { display: flex; gap: 3px; }
.btn {
  height: 55px;
  padding: 0 27px 1px 21px;
  display: flex;
  align-items: center;
  gap: 8px;
  border-radius: 28px;
  background: #6d7f8b;
  color: #f8fbfb;
  font-weight: 500;
}
.btn--disabled { background: #ccd6dd; color: #6d7f8b; cursor: default; }
.views { display: flex; align-items: center; gap: 25px; padding-bottom: 1px; }
.view { color: #8fa4b1; }
.view--active { color: #495763; }
.logout { margin-left: -7px; font-size: 26px; color: #006f8a; }

/* Status summary */
.status-panel {
  position: relative;
  min-height: 176px;
  padding: 4px 0;
  display: flex;
  background: #fff;
  box-shadow: 0 1px 8px rgba(73, 87, 99, 0.4);
  clip-path: inset(0 0 -16px 0);
}
.status { padding: 8px 32px 0; border-right: 1px solid #dee6eb; }
.status--health { width: 232px; }
.status--wide { width: 666px; padding-right: 33px; }
.status--last { border-right: 0; }
.status-head { height: 32px; display: flex; align-items: center; justify-content: space-between; }
.status-label { display: flex; align-items: center; gap: 5px; }
.more {
  width: 96px;
  height: 32px;
  border: 2px solid #1fbdd0;
  border-radius: 16px;
  color: #00a2b3;
  font-size: 19px;
  font-weight: 500;
  line-height: 24px;
}
.status-row { height: 40px; display: flex; align-items: center; justify-content: space-between; }
.status--health .status-row { height: 34px; }
.status-value { display: flex; align-items: center; gap: 9px; font-size: 36px; line-height: 36px; }
.revision { font-size: 22px; font-weight: 500; padding-top: 3px; }
.meta {
  margin: 6px 0 0;
  display: grid;
  grid-template-columns: auto 1fr;
  font-size: 18px;
  line-height: 22px;
}
.meta--spaced { margin-top: 20px; }
.meta dd { margin: 0; text-align: right; font-weight: 500; }
.result-time { margin: 7px 0 0; font-size: 18px; line-height: 22px; }

.content { flex: 1; display: flex; }

/* Filters */
.filters {
  width: 384px;
  padding: 16px 40px 26px 16px;
  display: flex;
  flex-direction: column;
  gap: 26px;
  box-shadow: 1px 0 4px rgba(73, 87, 99, 0.25);
}
.filters-head { height: 26px; display: flex; align-items: center; gap: 25px; color: #6d7f8b; }
.filters-head svg { color: #495763; }
.filters-head span { padding-top: 4px; }
.filter-card {
  padding: 16px 16px 27px;
  border-radius: 8px;
  background: #fff;
  box-shadow: 1px 2px 3px rgba(73, 87, 99, 0.2);
}
.filter-title {
  height: 28px;
  padding-top: 2px;
  display: flex;
  align-items: center;
  justify-content: space-between;
  color: #8fa4b1;
  font-weight: 500;
}
.filter-title svg { margin-top: 3px; color: #495763; }
.filter-input {
  display: block;
  width: 100%;
  height: 59px;
  margin-top: 27px;
  padding: 0 16px 1px;
  border: 2px solid #8fa4b1;
  border-radius: 8px;
  background: #fff;
  color: #495763;
  font: inherit;
  font-size: 22px;
  text-rendering: inherit;
}
.filter-input::placeholder { color: #6d7f8b; opacity: 1; }
.options { padding: 24px 8px 0; margin-bottom: -10px; }
.option { height: 58px; display: flex; align-items: center; gap: 8px; font-size: 26px; }
.option input {
  appearance: none;
  width: 32px;
  height: 32px;
  margin: 0 5px 0 0;
  border: 3px solid #495763;
  border-radius: 5px;
}

/* Network graph */
.canvas { flex: 1; min-width: 0; padding: 30px 26px; display: flex; align-items: flex-start; gap: 336px; }
.zoom {
  flex: none;
  height: 70px;
  padding: 0 18px 0 8px;
  display: flex;
  align-items: center;
  background: #f8fbfb;
  box-shadow: 1px 2px 4px rgba(73, 87, 99, 0.45);
}
.zoom-btn { width: 51px; height: 43px; display: flex; align-items: center; justify-content: center; color: #6d7f8b; }
.zoom-value {
  width: 64px;
  height: 43px;
  margin-left: 7px;
  border: 2px solid #8fa4b1;
  background: #dee6eb;
  font-size: 22px;
  line-height: 37px;
  text-align: center;
}
.graph { display: flex; align-items: flex-start; padding-top: 58px; }
.cloud { width: 128px; height: 90px; margin: 3px 1px 0 0; }
.edge { width: 80px; height: 84px; }
.node {
  position: relative;
  flex: none;
  width: 451px;
  height: 83px;
  display: flex;
  border-radius: 6px;
  background: #fff;
  box-shadow: 1px 1px 2px rgba(73, 87, 99, 0.25);
}
.node--host { background: #ddf5f7; }
.node-kind {
  width: 100px;
  padding-top: 17px;
  display: flex;
  flex-direction: column;
  align-items: center;
  justify-content: space-between;
  font-size: 18px;
  line-height: 18px;
  color: #8fa4b1;
}
.node-kind span { color: #495763; }
.node--host .node-kind { padding-top: 14px; color: #0dadea; }
.node-body { flex: 1; min-width: 0; padding: 19px 0 0 7px; }
.node-name { white-space: nowrap; }
.node-state { display: flex; gap: 3px; color: #18be94; }
.node-link { margin-left: 5px; }
.kebab { width: 46px; height: 83px; display: flex; align-items: center; justify-content: center; color: #00a2b3; }
.tags { position: absolute; right: 3px; bottom: -18px; display: flex; gap: 2px; }
.tag {
  height: 26px;
  padding: 0 6px;
  border: 2px solid #8fa4b1;
  border-radius: 8px;
  background: #ccd6dd;
  font-size: 16px;
  line-height: 22px;
}
```
